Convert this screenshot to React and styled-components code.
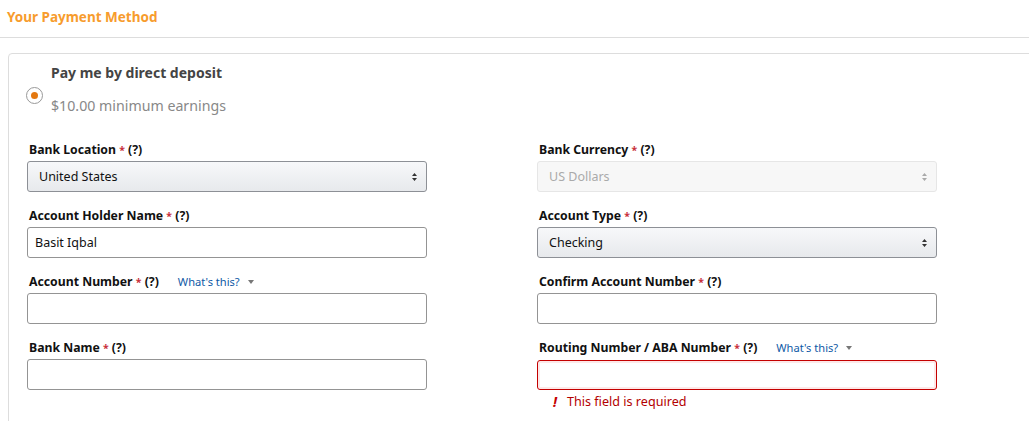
import React from "react";
import styled, { createGlobalStyle } from "styled-components";

const GlobalStyle = createGlobalStyle`
  html, body {
    margin: 0;
    height: 421px;
    overflow: hidden;
    background: #fff;
  }
  body {
    font-family: "Noto Sans", "Liberation Sans", sans-serif;
    font-size: 12.5px;
    color: #111;
  }
`;

const Page = styled.div`
  width: 1029px;
  height: 421px;
  overflow: hidden;
`;

const Heading = styled.div`
  height: 38px;
  box-sizing: border-box;
  padding: 8px 0 0 7px;
  border-bottom: 1px solid #ddd;
  color: #f79c2d;
  font-size: 13.5px;
  font-weight: 700;
  line-height: 18px;
`;

const Panel = styled.div`
  margin: 15px -20px 0 8px;
  height: 400px;
  box-sizing: border-box;
  padding: 0 0 0 18px;
  border: 1px solid #ddd;
  border-radius: 4px;
`;

const MethodRow = styled.div`
  display: flex;
  align-items: center;
  height: 83px;
`;

const Radio = styled.span`
  width: 17px;
  height: 17px;
  box-sizing: border-box;
  margin: 0 0 0 -1px;
  display: flex;
  align-items: center;
  justify-content: center;
  background: #fff;
  border: 1px solid #999;
  border-radius: 50%;

  &::after {
    content: "";
    width: 7.5px;
    height: 7.5px;
    border-radius: 50%;
    background: #e47911;
  }
`;

const MethodText = styled.div`
  margin-left: 8px;
  align-self: flex-start;
`;

const MethodTitle = styled.div`
  margin-top: 9px;
  color: #444;
  font-size: 14px;
  font-weight: 700;
  line-height: 20px;
`;

const MethodNote = styled.div`
  margin-top: 13px;
  color: #888;
  font-size: 14.2px;
  line-height: 20px;
`;

const FormGrid = styled.div`
  display: grid;
  grid-template-columns: 400px 400px;
  column-gap: 110px;
  row-gap: 11px;
`;

const Field = styled.div`
  display: flex;
  flex-direction: column;
`;

const LabelRow = styled.div`
  display: flex;
  align-items: center;
  height: 24px;
  padding: 2px 0 0 2px;
  box-sizing: border-box;
`;

const Label = styled.label`
  font-size: 12.25px;
  font-weight: 700;
  line-height: 18px;
  color: #111;
`;

const Star = styled.span`
  color: #c8303a;
  font-size: 10.5px;
  font-weight: 700;
`;

const HelpLink = styled.a`
  margin-left: 19px;
  color: #0f5aa6;
  font-size: 11.1px;
  line-height: 18px;
`;

const Caret = styled.span`
  margin-left: 8px;
  width: 0;
  height: 0;
  border-left: 3.5px solid transparent;
  border-right: 3.5px solid transparent;
  border-top: 4px solid #777;
`;

const SelectBox = styled.div`
  height: 31px;
  box-sizing: border-box;
  padding: 0 9px 0 11px;
  display: flex;
  align-items: center;
  justify-content: space-between;
  font-size: 12.5px;
  color: ${(p) => (p.$disabled ? "#aaa" : "#111")};
  background: ${(p) =>
    p.$disabled ? "#f7f7f7" : "linear-gradient(#f7f8fa, #e7e9ec)"};
  border: 1px solid ${(p) => (p.$disabled ? "#e6e6e6" : "#8d9096")};
  border-radius: 3px;
`;

const Arrows = styled.svg`
  width: 5px;
  height: 8px;
  fill: ${(p) => (p.$disabled ? "#aaa" : "#333")};
`;

const TextBox = styled.div`
  height: ${(p) => (p.$error ? "30px" : "31px")};
  margin-top: ${(p) => (p.$error ? "1px" : "0")};
  box-sizing: border-box;
  padding: 0 7px;
  display: flex;
  align-items: center;
  font-size: 12.5px;
  color: #111;
  background: #fff;
  border: 1px solid ${(p) => (p.$error ? "#c40000" : "#949494")};
  border-radius: 3px;
  box-shadow: ${(p) => (p.$error ? "inset 0 0 0 2px #fde8e8" : "none")};
`;

const ErrorRow = styled.div`
  display: flex;
  align-items: center;
  height: 23px;
  padding-left: 16px;
  color: #b30000;
  font-size: 12.6px;
`;

const ErrorMark = styled.span`
  width: 14px;
  color: #c40000;
  font-size: 14px;
  font-weight: 700;
  font-style: italic;
`;

function Select({ value, disabled }) {
  return (
    <SelectBox $disabled={disabled}>
      {value}
      <Arrows $disabled={disabled} viewBox="0 0 5 8">
        <path d="M2.5 0 5 3H0zM2.5 8 0 5h5z" />
      </Arrows>
    </SelectBox>
  );
}

function FieldLabel({ text, help }) {
  return (
    <LabelRow>
      <Label>
        {text} <Star>*</Star> (?)
      </Label>
      {help && (
        <>
          <HelpLink>What's this?</HelpLink>
          <Caret />
        </>
      )}
    </LabelRow>
  );
}

export default function App() {
  return (
    <Page>
      <GlobalStyle />
      <Heading>Your Payment Method</Heading>
      <Panel>
        <MethodRow>
          <Radio />
          <MethodText>
            <MethodTitle>Pay me by direct deposit</MethodTitle>
            <MethodNote>$10.00 minimum earnings</MethodNote>
          </MethodText>
        </MethodRow>
        <FormGrid>
          <Field>
            <FieldLabel text="Bank Location" />
            <Select value="United States" />
          </Field>
          <Field>
            <FieldLabel text="Bank Currency" />
            <Select value="US Dollars" disabled />
          </Field>
          <Field>
            <FieldLabel text="Account Holder Name" />
            <TextBox>Basit Iqbal</TextBox>
          </Field>
          <Field>
            <FieldLabel text="Account Type" />
            <Select value="Checking" />
          </Field>
          <Field>
            <FieldLabel text="Account Number" help />
            <TextBox />
          </Field>
          <Field>
            <FieldLabel text="Confirm Account Number" />
            <TextBox />
          </Field>
          <Field>
            <FieldLabel text="Bank Name" />
            <TextBox />
          </Field>
          <Field>
            <FieldLabel text="Routing Number / ABA Number" help />
            <TextBox $error />
            <ErrorRow>
              <ErrorMark>!</ErrorMark>
              This field is required
            </ErrorRow>
          </Field>
        </FormGrid>
      </Panel>
    </Page>
  );
}
